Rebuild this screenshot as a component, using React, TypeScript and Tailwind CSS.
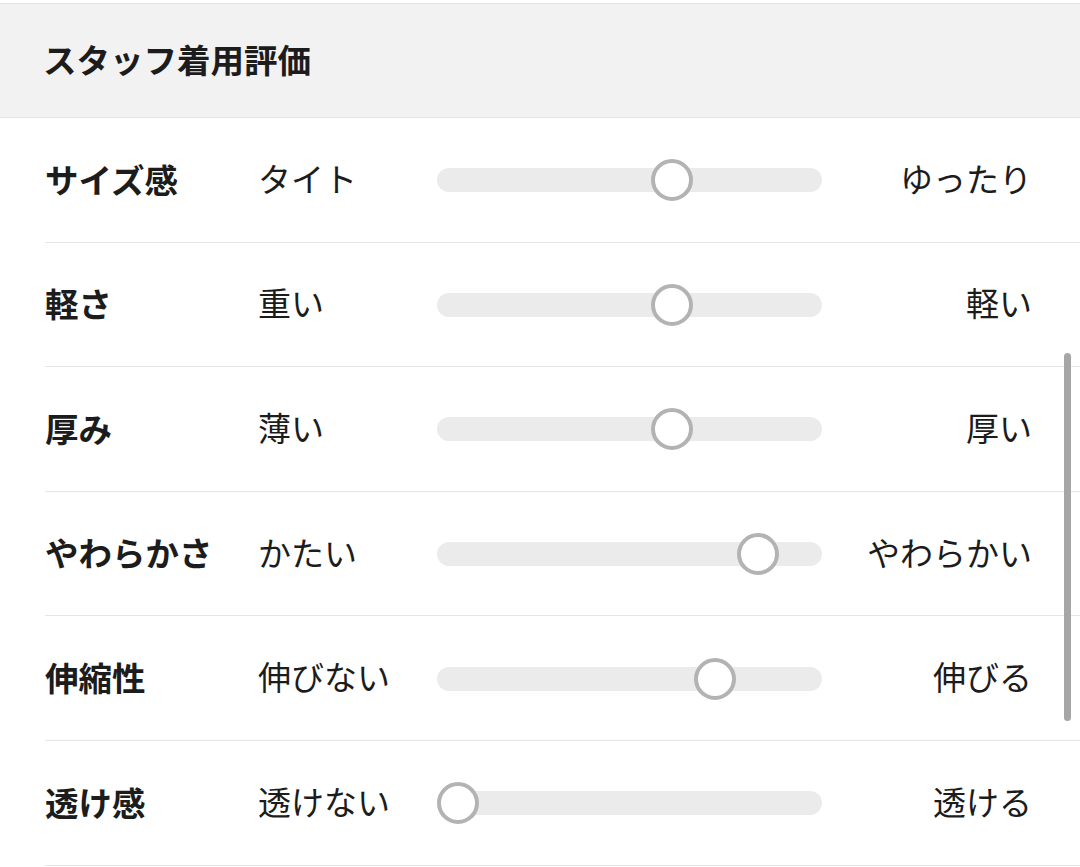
const rows = [
  { label: 'サイズ感', left: 'タイト', right: 'ゆったり', value: 5 },
  { label: '軽さ', left: '重い', right: '軽い', value: 5 },
  { label: '厚み', left: '薄い', right: '厚い', value: 5 },
  { label: 'やわらかさ', left: 'かたい', right: 'やわらかい', value: 7 },
  { label: '伸縮性', left: '伸びない', right: '伸びる', value: 6 },
  { label: '透け感', left: '透けない', right: '透ける', value: 0 },
]

const STEPS = 8

function Scale({ value }: { value: number }) {
  // thumb travels between the two ends of the track
  return (
    <div className="relative mt-[4px] h-[42px] w-[385px]">
      <div className="absolute left-0 right-0 top-[9px] h-[24px] rounded-full bg-[#ebebeb]" />
      <div
        className="absolute top-0 h-[42px] w-[42px] rounded-full border-[4px] border-[#b3b3b3] bg-white"
        style={{ left: `${(value / STEPS) * (385 - 42)}px` }}
      />
    </div>
  )
}

export default function App() {
  return (
    <div
      className="relative h-[867px] w-[1080px] overflow-hidden bg-white text-[#1c1c1c]"
      style={{ fontFamily: '"Noto Sans CJK JP", "Noto Sans", sans-serif' }}
    >
      <div className="mt-[3px] flex h-[115px] items-center border-y border-[#e4e4e4] bg-[#f2f2f2] pb-[4px] pl-[43px]">
        <h2 className="text-[33.5px] font-bold leading-none">スタッフ着用評価</h2>
      </div>

      <div className="pl-[45px]">
        {rows.map((row) => (
          <div
            key={row.label}
            className="flex h-[124.6px] items-center border-b border-[#e6e6e6] pr-[48px] pb-[3px]"
          >
            <div className="w-[213px] text-[33.5px] font-bold leading-none">{row.label}</div>
            <div className="w-[179px] text-[33px] leading-none">{row.left}</div>
            <Scale value={row.value} />
            <div className="flex-1 text-right text-[33px] leading-none">{row.right}</div>
          </div>
        ))}
      </div>

      {/* scrollbar */}
      <div className="absolute left-[1064px] top-[353px] h-[368px] w-[7px] rounded-full bg-[#a6a6a6]" />
    </div>
  )
}
